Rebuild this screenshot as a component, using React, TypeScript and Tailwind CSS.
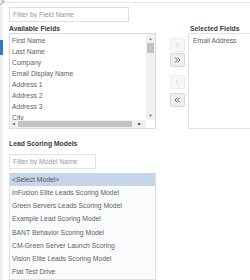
import React from 'react';

const fields = ['First Name', 'Last Name', 'Company', 'Email Display Name', 'Address 1', 'Address 2', 'Address 3', 'City'];
const models = [
  'InFusion Elite Leads Scoring Model',
  'Green Servers Leads Scoring Model',
  'Example Lead Scoring Model',
  'BANT Behavior Scoring Model',
  'CM-Green Server Launch Scoring',
  'Vision Elite Leads Scoring Model',
  'Fiat Test Drive',
];

// chevron shapes for the move buttons
const Chevron: React.FC<{ dir: 'left' | 'right'; double?: boolean }> = ({ dir, double }) => {
  const single = dir === 'right' ? 'M2 1.5 L4.5 4 L2 6.5' : 'M4.5 1.5 L2 4 L4.5 6.5';
  const second = dir === 'right' ? 'M4.5 1.5 L7 4 L4.5 6.5' : 'M7 1.5 L4.5 4 L7 6.5';
  return (
    <svg width={double ? 9 : 7} height="8" viewBox={double ? '0 0 9 8' : '0 0 7 8'} fill="none" stroke="currentColor" strokeWidth="0.9">
      <path d={single} />
      {double && <path d={second} />}
    </svg>
  );
};

const MoveButton: React.FC<{ dir: 'left' | 'right'; double?: boolean; disabled?: boolean }> = ({ dir, double, disabled }) => (
  <button
    className={
      'w-[15px] h-[14px] flex items-center justify-center rounded-[2px] border ' +
      (disabled ? 'border-[#ededed] bg-[#f7f7f7] text-[#d2d2d2]' : 'border-[#d6d6d6] bg-[#efefef] text-[#555]')
    }
  >
    <Chevron dir={dir} double={double} />
  </button>
);

export default function App() {
  return (
    <div
      className="w-[250px] h-[280px] overflow-hidden bg-white flex text-[6.8px] text-[#5f5f5f]"
      style={{ fontFamily: '"Liberation Sans", Arial, sans-serif' }}
    >
      {/* left nav sliver */}
      <div className="w-[3px] shrink-0 flex flex-col bg-[#eef0f2]">
        <svg width="5" height="6" viewBox="0 0 5 6" className="shrink-0" stroke="#8a8a8a" strokeWidth="0.8" fill="none">
          <path d="M0 5 L4 1 M1.5 1 L4 1 L4 3.5" />
        </svg>
        <div className="h-[34px]" />
        <div className="h-[15px] bg-[#2a7ad0]" />
      </div>

      <div className="flex-1 flex flex-col border-t border-[#e3e6ea] mt-[2px] pl-[6px] pt-[4px] min-w-0">
        <input
          className="w-[120px] h-[15px] border border-[#dedede] px-[3px] text-[6.8px] outline-none placeholder:text-[#9a9a9a]"
          placeholder="Filter by Field Name"
        />

        <div className="flex mt-[2px]">
          <div className="w-[147px] shrink-0">
            <div className="h-[9px] leading-[9px] font-bold text-[#3a3a3a]">Available Fields</div>
            <div className="h-[96px] border border-[#dcdcdc] flex flex-col">
              <div className="flex flex-1 min-h-0">
                <div className="flex-1 overflow-hidden pt-[1px]">
                  {fields.map(f => (
                    <div key={f} className="h-[11px] leading-[11px] pl-[2px] whitespace-nowrap">{f}</div>
                  ))}
                </div>
                <div className="w-[9px] bg-[#f1f1f1] flex flex-col items-center">
                  <div className="h-[9px] flex items-center justify-center text-[4px] text-[#777]">▲</div>
                  <div className="w-[7px] h-[10px] bg-[#c3c3c3]" />
                  <div className="flex-1" />
                  <div className="h-[9px] flex items-center justify-center text-[4px] text-[#505050]">▼</div>
                </div>
              </div>
              <div className="h-[8px] flex bg-[#f1f1f1]">
                <div className="w-[8px] flex items-center justify-center text-[4px] text-[#777]">◀</div>
                <div className="w-[115px] my-[1px] bg-[#c3c3c3]" />
                <div className="w-[14px] flex items-center justify-center text-[4px] text-[#505050]">▶</div>
                <div className="w-[9px] bg-white" />
              </div>
            </div>
          </div>

          <div className="ml-[14px] pt-[14px] flex flex-col gap-[1px]">
            <MoveButton dir="right" disabled />
            <MoveButton dir="right" double />
            <div className="h-[6px]" />
            <MoveButton dir="left" disabled />
            <div className="h-[2px]" />
            <MoveButton dir="left" double />
          </div>

          <div className="ml-[3px] w-[80px] shrink-0">
            <div className="h-[9px] leading-[9px] font-bold text-[#3a3a3a] pl-[2px]">Selected Fields</div>
            <div className="h-[96px] border border-[#e2e2e2] pt-[1px]">
              <div className="h-[11px] leading-[11px] pl-[4px] whitespace-nowrap">Email Address</div>
            </div>
          </div>
        </div>

        <div className="mt-[10px] h-[9px] leading-[9px] font-bold text-[#3a3a3a]">Lead Scoring Models</div>
        <input
          className="mt-[6px] w-[87px] h-[15px] border border-[#e2e2e2] px-[3px] text-[6.8px] outline-none placeholder:text-[#9a9a9a]"
          placeholder="Filter by Model Name"
        />
        <div className="mt-[4px] w-[147px] flex-1 border-x border-b border-[#e0e0e0] bg-[#fafbfc]">
          <div className="h-[13px] leading-[13px] bg-[#c6d6ea] pl-[2px] text-[#555]">&lt;Select Model&gt;</div>
          {models.map(m => (
            <div key={m} className="h-[13.2px] leading-[13.2px] pl-[2px] whitespace-nowrap">{m}</div>
          ))}
        </div>
      </div>
    </div>
  );
}
